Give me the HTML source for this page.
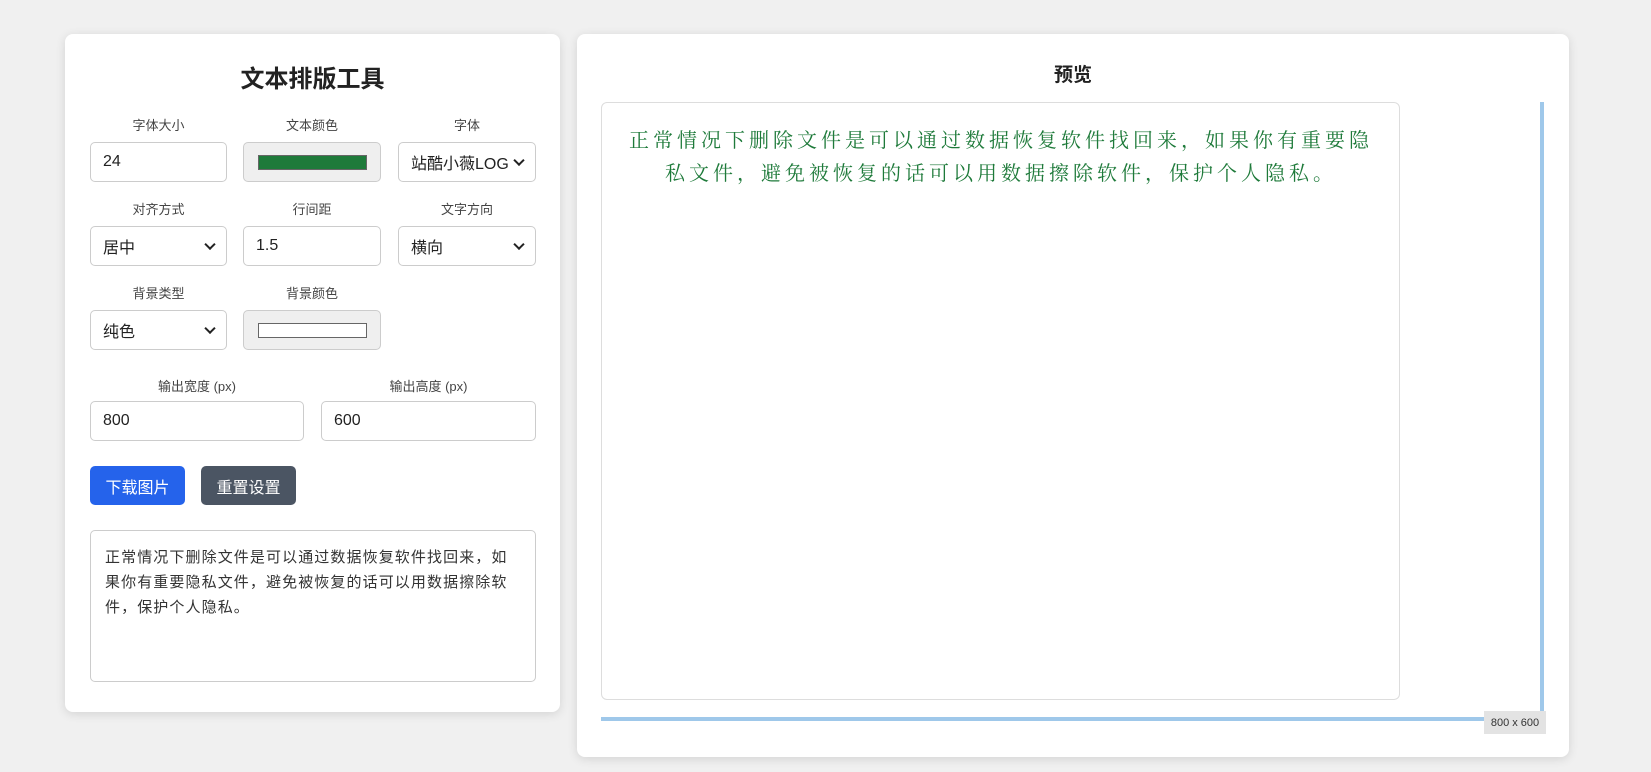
<!DOCTYPE html>
<html><head><meta charset="utf-8"><style>
*{box-sizing:border-box;margin:0;padding:0}
body{width:1651px;height:772px;background:#f0f0f0;font-family:"Liberation Sans","Noto Sans CJK SC",sans-serif;position:relative;overflow:hidden;color:#333}
.card{position:absolute;background:#fff;border-radius:8px;box-shadow:0 2px 10px rgba(0,0,0,.12)}
.a{position:absolute}
.lbl{position:absolute;font-size:13px;color:#444;text-align:center}
.in{position:absolute;border:1px solid #ccc;border-radius:5px;background:#fff;font-size:16px;color:#222;padding-left:12px;display:flex;align-items:center}
.sel{padding-right:26px}
.sel::after{content:"";position:absolute;right:12px;top:50%;width:6px;height:6px;border-right:2px solid #222;border-bottom:2px solid #222;transform:translateY(-70%) rotate(45deg)}
.col{background:#efefef;justify-content:center;padding:0}
.btn{position:absolute;color:#fff;border-radius:5px;font-size:16px;display:flex;align-items:center;justify-content:center}
</style></head><body>
<div class="card" style="left:65px;top:34px;width:495px;height:678px"></div>
<div class="card" style="left:577px;top:34px;width:992px;height:723px"></div>

<div class="a" style="left:65px;top:59px;width:495px;text-align:center;font-size:24px;font-weight:bold;color:#222">文本排版工具</div>

<div class="lbl" style="left:90px;top:115px;width:137px">字体大小</div>
<div class="lbl" style="left:243px;top:115px;width:138px">文本颜色</div>
<div class="lbl" style="left:398px;top:115px;width:138px">字体</div>
<div class="in" style="left:90px;top:142px;width:137px;height:40px">24</div>
<div class="in col" style="left:243px;top:142px;width:138px;height:40px"><div style="width:109px;height:15px;background:#1e7a3a;border:1px solid #666"></div></div>
<div class="in sel" style="left:398px;top:142px;width:138px;height:40px;overflow:hidden;white-space:nowrap"><span style="overflow:hidden;display:block">站酷小薇LOGO</span></div>

<div class="lbl" style="left:90px;top:199px;width:137px">对齐方式</div>
<div class="lbl" style="left:243px;top:199px;width:138px">行间距</div>
<div class="lbl" style="left:398px;top:199px;width:138px">文字方向</div>
<div class="in sel" style="left:90px;top:226px;width:137px;height:40px">居中</div>
<div class="in" style="left:243px;top:226px;width:138px;height:40px">1.5</div>
<div class="in sel" style="left:398px;top:226px;width:138px;height:40px">横向</div>

<div class="lbl" style="left:90px;top:283px;width:137px">背景类型</div>
<div class="lbl" style="left:243px;top:283px;width:138px">背景颜色</div>
<div class="in sel" style="left:90px;top:310px;width:137px;height:40px">纯色</div>
<div class="in col" style="left:243px;top:310px;width:138px;height:40px"><div style="width:109px;height:15px;background:#fff;border:1px solid #666"></div></div>

<div class="lbl" style="left:90px;top:376px;width:214px">输出宽度 (px)</div>
<div class="lbl" style="left:321px;top:376px;width:215px">输出高度 (px)</div>
<div class="in" style="left:90px;top:401px;width:214px;height:40px">800</div>
<div class="in" style="left:321px;top:401px;width:215px;height:40px">600</div>

<div class="btn" style="left:90px;top:466px;width:95px;height:39px;background:#2563eb">下载图片</div>
<div class="btn" style="left:201px;top:466px;width:95px;height:39px;background:#4b5563">重置设置</div>

<div class="in" style="left:90px;top:530px;width:446px;height:152px;display:block;padding:14px 8px 14px 14px;font-size:15px;letter-spacing:1.1px;line-height:25px;color:#333;white-space:nowrap;overflow:hidden">正常情况下删除文件是可以通过数据恢复软件找回来，如<br>果你有重要隐私文件，避免被恢复的话可以用数据擦除软<br>件，保护个人隐私。</div>

<div class="a" style="left:577px;top:60px;width:992px;text-align:center;font-size:19px;font-weight:bold;color:#222">预览</div>
<div class="a" style="left:601px;top:102px;width:799px;height:598px;border:1px solid #ddd;border-radius:6px;background:#fff"></div>
<div class="a" style="left:625px;top:122px;width:752px;text-align:center;font-family:'Noto Serif CJK SC',serif;font-size:20px;letter-spacing:4px;line-height:33px;color:#1e7a3a">正常情况下删除文件是可以通过数据恢复软件找回来，如果你有重要隐私文件，避免被恢复的话可以用数据擦除软件，保护个人隐私。</div>
<div class="a" style="left:1540px;top:102px;width:4px;height:610px;background:#9fc8ea"></div>
<div class="a" style="left:601px;top:717px;width:883px;height:4px;background:#9fc8ea"></div>
<div class="a" style="left:1484px;top:711px;width:62px;height:23px;background:#e3e3e3;font-size:11px;color:#333;display:flex;align-items:center;justify-content:center">800 x 600</div>
</body></html>
